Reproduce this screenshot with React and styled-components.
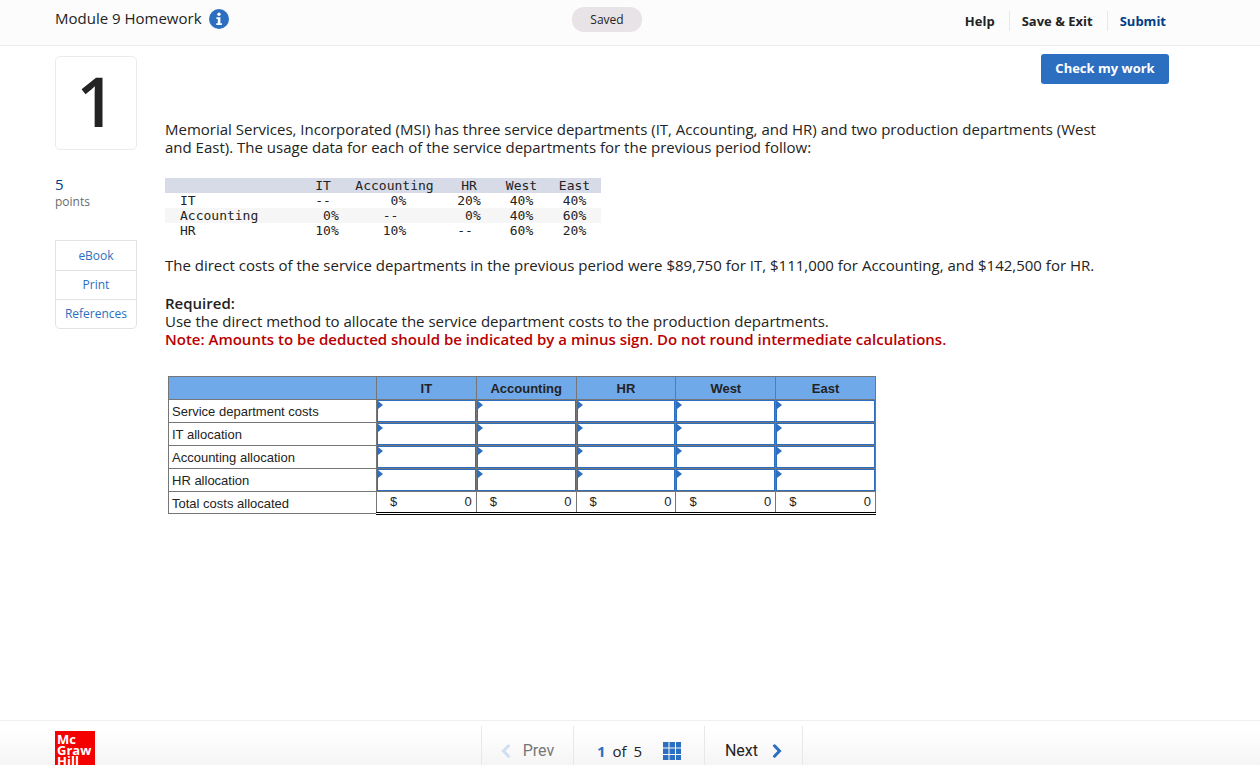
import { useState } from 'react';
import styled, { createGlobalStyle } from 'styled-components';

const GlobalStyle = createGlobalStyle`
    * {
        box-sizing: border-box;
    }
    body {
        margin: 0;
        background: #fff;
        color: #232323;
        font-family: 'Open Sans', 'Noto Sans', sans-serif;
        font-size: 15px;
        line-height: 18px;
    }
    p, h1, h2 {
        margin: 0;
    }
    a {
        text-decoration: none;
    }
    button {
        padding: 0;
        border: 0;
        background: none;
        color: inherit;
        font: inherit;
        cursor: pointer;
    }
`;

const Page = styled.div`
    display: flex;
    flex-direction: column;
    height: 100vh;
    overflow: hidden;
`;

const Header = styled.header`
    display: grid;
    grid-template-columns: 1fr auto 1fr;
    align-items: start;
    height: 46px;
    flex-shrink: 0;
    padding: 7px 91px 0 55px;
    background: #fcfcfc;
    border-bottom: 1px solid #ebebeb;
`;

const TitleBox = styled.div`
    display: flex;
    align-items: center;
    gap: 7px;
    height: 24px;
`;

const Title = styled.h1`
    padding-bottom: 2px;
    font-size: 15px;
    font-weight: 400;
    white-space: nowrap;
`;

const InfoButton = styled.button`
    display: flex;
`;

const Saved = styled.div`
    width: 70px;
    height: 25px;
    margin-right: 10px;
    border-radius: 12px;
    background: #e8e3e7;
    font-size: 12px;
    line-height: 25px;
    text-align: center;
`;

const Menu = styled.nav`
    display: flex;
    justify-content: flex-end;
    padding-top: 4px;
`;

const MenuLink = styled.a`
    padding: 0 14px 0 12px;
    border-left: 1px solid #e8e8e8;
    color: ${(props) => (props.$primary ? '#003f87' : '#232323')};
    font-size: 13px;
    font-weight: 700;
    line-height: 20px;
    white-space: nowrap;

    &:first-child {
        border-left: 0;
    }
    &:last-child {
        padding-right: 3px;
    }
`;

const Main = styled.main`
    display: flex;
    align-items: flex-start;
    flex: 1;
    gap: 28px;
    min-height: 0;
    padding: 8px 91px 0 55px;
`;

const Side = styled.aside`
    flex: 0 0 82px;
    padding-top: 2px;
`;

const QuestionNumber = styled.div`
    height: 94px;
    margin-bottom: 25px;
    border: 1px solid #ebebeb;
    border-radius: 5px;
    font-size: 68px;
    font-weight: 600;
    line-height: 88px;
    text-align: center;
`;

const Points = styled.div`
    color: #003f87;
    font-size: 15px;
    line-height: 19px;
`;

const PointsLabel = styled.div`
    color: #6b6b6b;
    font-size: 12px;
    line-height: 16px;
`;

const Tools = styled.nav`
    display: flex;
    flex-direction: column;
    margin-top: 30px;
    border: 1px solid #e3e3e3;
    border-radius: 0 0 5px 5px;
`;

const ToolLink = styled.a`
    color: #2c6fc0;
    font-size: 12px;
    line-height: 29px;
    text-align: center;

    & + & {
        border-top: 1px solid #e3e3e3;
        line-height: 28px;
    }
`;

const Question = styled.section`
    display: flex;
    flex-direction: column;
    flex: 1;
    min-width: 0;
`;

const CheckButton = styled.button`
    align-self: flex-end;
    width: 128px;
    height: 30px;
    margin-bottom: 36px;
    padding-bottom: 2px;
    border-radius: 3px;
    background: #2c6fc0;
    color: #fff;
    font-size: 13px;
    font-weight: 700;
`;

const Text = styled.p`
    padding-right: 60px;
`;

const UsageTable = styled.table`
    width: 436px;
    margin: 22px 0 18px;
    border-collapse: collapse;
    table-layout: fixed;
    font-family: 'DejaVu Sans Mono', monospace;
    font-size: 13px;
    line-height: 15px;

    th, td {
        padding: 0;
        font-weight: 400;
        text-align: center;
        white-space: pre;
    }
    th:first-child {
        padding-left: 15px;
        text-align: left;
    }
    thead {
        background: #d7dae7;
    }
    tbody tr:nth-child(even) {
        background: #f6f6f6;
    }
`;

const Required = styled.h2`
    margin-top: 20px;
    font-size: 15px;
    font-weight: 600;
    line-height: 18px;
`;

const Note = styled.p`
    color: #b80000;
    font-weight: 600;
`;

const AnswerTable = styled.table`
    width: 708px;
    margin: 28px 0 0 3px;
    border-collapse: collapse;
    table-layout: fixed;
    font-family: 'Liberation Sans', Arial, sans-serif;
    font-size: 13px;
    line-height: 16px;

    th, td {
        height: 23px;
        padding: 0;
        border: 1px solid #767676;
    }
    th {
        padding-top: 2px;
    }
    thead th {
        background: #70a9ea;
    }
    tbody th {
        padding-left: 3px;
        font-weight: 400;
        text-align: left;
    }
`;

const AnswerCell = styled.td`
    position: relative;

    &::after {
        content: '';
        position: absolute;
        top: 1px;
        left: 1px;
        border: solid transparent;
        border-width: 4px 0 4px 5px;
        border-left-color: #2c6fc0;
    }
`;

const AnswerInput = styled.input`
    display: block;
    width: 100%;
    height: 22px;
    padding: 0 4px 0 8px;
    border: 1px solid #2c6fc0;
    border-radius: 0;
    outline: 0;
    font: inherit;
    text-align: right;
`;

const TotalRow = styled.tr`
    && th, && td {
        height: 22px;
    }
    && td {
        border-top: 1px solid #000;
        border-bottom: 3px double #000;
    }
`;

const Total = styled.div`
    display: flex;
    justify-content: space-between;
    padding: 0 4px 0 13px;
`;

const Footer = styled.footer`
    display: flex;
    align-items: flex-start;
    flex: none;
    height: 45px;
    padding: 0 55px;
    overflow: hidden;
    border-top: 1px solid #efefef;
    background: linear-gradient(#fff 20%, #f5f5f5);
`;

const Logo = styled.div`
    flex: none;
    width: 40px;
    height: 40px;
    margin-top: 10px;
    padding: 3px 2px;
    background: #f50000;
    color: #fff;
    font-size: 13px;
    font-weight: 700;
    line-height: 11px;
`;

const Pager = styled.nav`
    display: flex;
    margin: 5px auto 0 386px;
    height: 50px;
`;

const PagerItem = styled.div`
    display: flex;
    align-items: center;
    justify-content: center;
    width: ${(props) => props.$width}px;
    border-left: 1px solid #e8e8e8;
    font-size: 15px;

    &:last-child {
        border-right: 1px solid #e8e8e8;
    }
`;

const PagerButton = styled.button`
    display: flex;
    align-items: center;
    gap: 12px;
    font-family: Roboto, sans-serif;
    font-size: 16px;

    &:disabled {
        color: #777;
    }
`;

const NextButton = styled(PagerButton)`
    gap: 14px;
`;

const Current = styled.span`
    margin-right: 7px;
    color: #2c6fc0;
    font-weight: 700;
`;

const Count = styled.span`
    margin: 0 21px 0 7px;
`;

const GridButton = styled.button`
    display: flex;
`;

const InfoIcon = () => (
    <svg width="20" height="20" viewBox="0 0 20 20" aria-hidden="true">
        <circle cx="10" cy="10" r="10" fill="#2c6fc0" />
        <circle cx="10" cy="5.3" r="1.7" fill="#fff" />
        <path d="M7.4 8.2h4v6h1.5v1.7H7.3v-1.7h1.5V9.9H7.4z" fill="#fff" />
    </svg>
);

const Chevron = ({ left }) => (
    <svg width="10" height="14" viewBox="0 0 10 14" fill="none" aria-hidden="true">
        <path
            d={left ? 'M7.5 1.8 2.5 7l5 5.2' : 'M2.5 1.8 7.5 7l-5 5.2'}
            stroke={left ? '#cfdff2' : '#2c6fc0'}
            strokeWidth="3"
            strokeLinecap="round"
        />
    </svg>
);

const GridIcon = () => (
    <svg width="18" height="18" viewBox="0 0 18 18" fill="#2c6fc0" aria-hidden="true">
        {[0, 6.5, 13].map((y) => [0, 6.5, 13].map((x) => <rect key={`${x}-${y}`} x={x} y={y} width="5.5" height="5.5" />))}
    </svg>
);

const NB = '\u00a0';
const departments = ['IT', 'Accounting', 'HR', 'West', 'East'];
const usage = [
    ['IT', `--${NB}`, `${NB}0%`, '20%', '40%', '40%'],
    ['Accounting', `${NB}0%`, `--${NB}`, `${NB}0%`, '40%', '60%'],
    ['HR', '10%', '10%', `--${NB}`, '60%', '20%'],
];
const usageWidths = [143, 38, 97, 52, 53, 53];
const answerRows = ['Service department costs', 'IT allocation', 'Accounting allocation', 'HR allocation'];

const Usage = () => (
    <UsageTable>
        <colgroup>
            {usageWidths.map((width, i) => (
                <col key={i} width={width} />
            ))}
        </colgroup>
        <thead>
            <tr>
                <th></th>
                {departments.map((name) => (
                    <th key={name} scope="col">{name === 'IT' ? `IT${NB}` : name}</th>
                ))}
            </tr>
        </thead>
        <tbody>
            {usage.map(([name, ...values]) => (
                <tr key={name}>
                    <th scope="row">{name}</th>
                    {values.map((value, i) => (
                        <td key={i}>{value}</td>
                    ))}
                </tr>
            ))}
        </tbody>
    </UsageTable>
);

const Answers = () => {
    const [values, setValues] = useState({});

    const sum = (name) => answerRows.reduce((total, row) => total + (Number(values[`${row}-${name}`]) || 0), 0);

    return (
        <AnswerTable>
            <colgroup>
                <col width="208" />
                {departments.map((name) => (
                    <col key={name} />
                ))}
            </colgroup>
            <thead>
                <tr>
                    <th></th>
                    {departments.map((name) => (
                        <th key={name} scope="col">{name}</th>
                    ))}
                </tr>
            </thead>
            <tbody>
                {answerRows.map((row) => (
                    <tr key={row}>
                        <th scope="row">{row}</th>
                        {departments.map((name) => (
                            <AnswerCell key={name}>
                                <AnswerInput
                                    aria-label={`${row}, ${name}`}
                                    value={values[`${row}-${name}`] || ''}
                                    onChange={(e) => setValues({ ...values, [`${row}-${name}`]: e.target.value })}
                                />
                            </AnswerCell>
                        ))}
                    </tr>
                ))}
                <TotalRow>
                    <th scope="row">Total costs allocated</th>
                    {departments.map((name) => (
                        <td key={name}>
                            <Total>
                                <span>$</span>
                                <span>{sum(name)}</span>
                            </Total>
                        </td>
                    ))}
                </TotalRow>
            </tbody>
        </AnswerTable>
    );
};

const App = () => {
    return (
        <Page>
            <GlobalStyle />
            <Header>
                <TitleBox>
                    <Title>Module 9 Homework</Title>
                    <InfoButton aria-label="Assignment information">
                        <InfoIcon />
                    </InfoButton>
                </TitleBox>
                <Saved role="status">Saved</Saved>
                <Menu>
                    <MenuLink href="#help">Help</MenuLink>
                    <MenuLink href="#exit">Save &amp; Exit</MenuLink>
                    <MenuLink href="#submit" $primary>Submit</MenuLink>
                </Menu>
            </Header>
            <Main>
                <Side>
                    <QuestionNumber>1</QuestionNumber>
                    <Points>5</Points>
                    <PointsLabel>points</PointsLabel>
                    <Tools>
                        <ToolLink href="#ebook">eBook</ToolLink>
                        <ToolLink href="#print">Print</ToolLink>
                        <ToolLink href="#references">References</ToolLink>
                    </Tools>
                </Side>
                <Question>
                    <CheckButton>Check my work</CheckButton>
                    <Text>
                        Memorial Services, Incorporated (MSI) has three service departments (IT, Accounting, and HR) and two
                        production departments (West and East). The usage data for each of the service departments for the
                        previous period follow:
                    </Text>
                    <Usage />
                    <Text>
                        The direct costs of the service departments in the previous period were $89,750 for IT, $111,000 for
                        Accounting, and $142,500 for HR.
                    </Text>
                    <Required>Required:</Required>
                    <Text>Use the direct method to allocate the service department costs to the production departments.</Text>
                    <Note>
                        Note: Amounts to be deducted should be indicated by a minus sign. Do not round intermediate
                        calculations.
                    </Note>
                    <Answers />
                </Question>
            </Main>
            <Footer>
                <Logo>
                    Mc
                    <br />
                    Graw
                    <br />
                    Hill
                </Logo>
                <Pager>
                    <PagerItem $width={92}>
                        <PagerButton disabled>
                            <Chevron left />
                            Prev
                        </PagerButton>
                    </PagerItem>
                    <PagerItem $width={131}>
                        <Current>1</Current>of<Count>5</Count>
                        <GridButton aria-label="All questions">
                            <GridIcon />
                        </GridButton>
                    </PagerItem>
                    <PagerItem $width={99}>
                        <NextButton>
                            Next
                            <Chevron />
                        </NextButton>
                    </PagerItem>
                </Pager>
            </Footer>
        </Page>
    );
};

export default App;
